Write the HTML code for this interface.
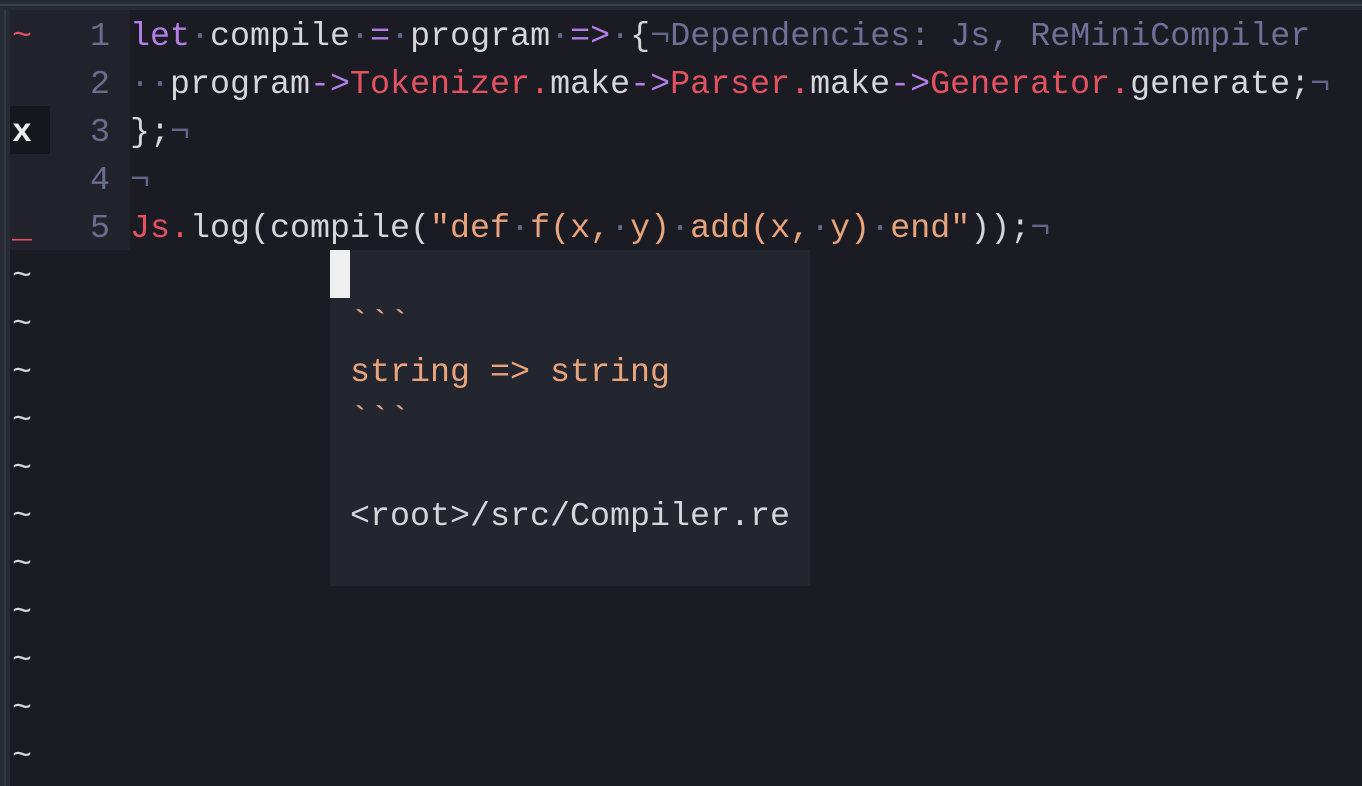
<!DOCTYPE html>
<html><head><meta charset="utf-8"><style>
html,body{margin:0;padding:0;}
body{width:1362px;height:786px;background:#1b1c23;overflow:hidden;position:relative;font-family:"Liberation Mono",monospace;font-size:33.33px;color:#d5d5da;}
.topbar{position:absolute;left:0;top:0;width:1362px;height:10px;background:#262a33;}
.topbar:after{content:"";position:absolute;left:0;top:4px;width:100%;height:2px;background:#3a404a;}
.leftbar{position:absolute;left:0;top:10px;width:10px;height:776px;background:#262a33;}
.leftbar:after{content:"";position:absolute;left:4px;top:0;width:2px;height:100%;background:#333842;}
.gutter{position:absolute;left:10px;top:10px;width:120px;height:240px;background:#21222b;}
.sign{position:absolute;left:10px;width:40px;height:48px;line-height:54px;}
.xs{background:#16171d;color:#ececec;font-weight:bold;padding-left:2px;box-sizing:border-box;}
.num{position:absolute;left:50px;width:60px;text-align:right;color:#6a6d8f;height:48px;line-height:54px;}
.code{position:absolute;left:130px;height:48px;line-height:54px;white-space:pre;}
.k{color:#b57ee6}.r{color:#e4525f}.d{color:#62668a}.s{color:#eaa47c}.c{color:#706f98}
.tl{position:absolute;left:12px;color:#d5d5da;height:48px;line-height:54px;}
.popup{position:absolute;left:330px;top:250px;width:480px;height:336px;background:#23252f;z-index:1;}
.cur{position:absolute;left:0;top:0;width:20px;height:48px;background:#efefef;}
.pl{position:absolute;left:20px;height:48px;line-height:54px;white-space:pre;color:#d5d5da;}
.pl.s{color:#eaa47c;}
</style></head><body>
<div class="topbar"></div><div class="leftbar"></div>
<div class="gutter"></div>
<div class="sign r" style="top:10px;padding-left:2px">~</div>
<div class="sign xs" style="top:106px">x</div>
<div class="sign r" style="top:202px;padding-left:2px">_</div>
<div class="num" style="top:10px">1</div>
<div class="num" style="top:58px">2</div>
<div class="num" style="top:106px">3</div>
<div class="num" style="top:154px">4</div>
<div class="num" style="top:202px">5</div>
<div class="code" style="top:10px"><span class="k">let</span><span class="d">·</span>compile<span class="d">·</span><span class="k">=</span><span class="d">·</span>program<span class="d">·</span><span class="k">=&gt;</span><span class="d">·</span>{<span class="d">¬</span><span class="c">Dependencies: Js, ReMiniCompiler</span></div>
<div class="code" style="top:58px"><span class="d">··</span>program<span class="k">-&gt;</span><span class="r">Tokenizer.</span>make<span class="k">-&gt;</span><span class="r">Parser.</span>make<span class="k">-&gt;</span><span class="r">Generator.</span>generate;<span class="d">¬</span></div>
<div class="code" style="top:106px">};<span class="d">¬</span></div>
<div class="code" style="top:154px"><span class="d">¬</span></div>
<div class="code" style="top:202px"><span class="r">Js.</span>log(compile(<span class="s">"def<span class="d">·</span>f(x,<span class="d">·</span>y)<span class="d">·</span>add(x,<span class="d">·</span>y)<span class="d">·</span>end"</span>));<span class="d">¬</span></div>
<div class="tl" style="top:250px">~</div><div class="tl" style="top:298px">~</div><div class="tl" style="top:346px">~</div><div class="tl" style="top:394px">~</div><div class="tl" style="top:442px">~</div><div class="tl" style="top:490px">~</div><div class="tl" style="top:538px">~</div><div class="tl" style="top:586px">~</div><div class="tl" style="top:634px">~</div><div class="tl" style="top:682px">~</div><div class="tl" style="top:730px">~</div>
<div class="popup">
<div class="cur"></div>
<div class="pl s" style="top:48px">&#96;&#96;&#96;</div>
<div class="pl s" style="top:96px">string =&gt; string</div>
<div class="pl s" style="top:144px">&#96;&#96;&#96;</div>
<div class="pl" style="top:240px">&lt;root&gt;/src/Compiler.re</div>
</div>
</body></html>
